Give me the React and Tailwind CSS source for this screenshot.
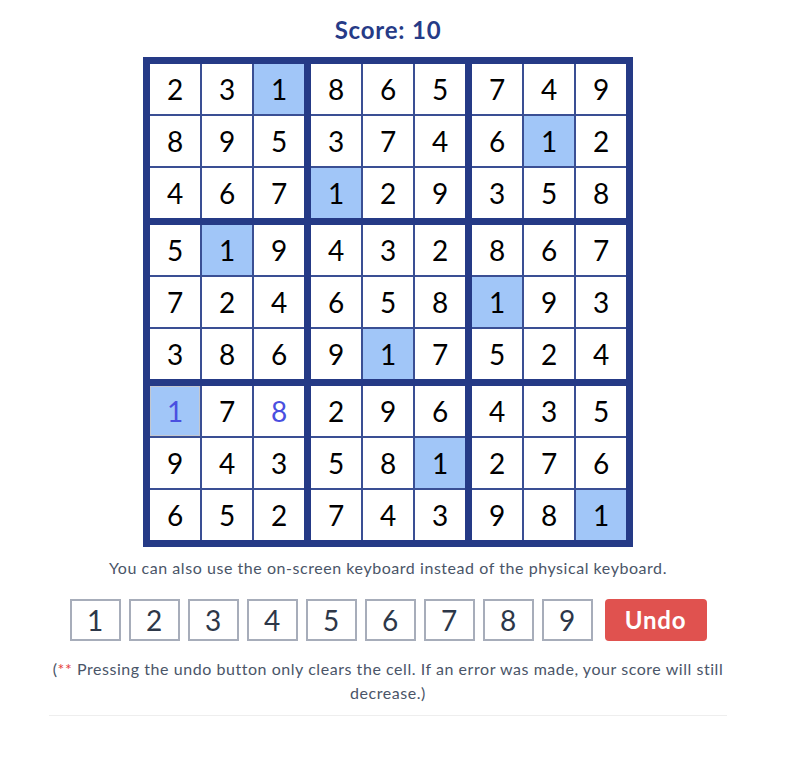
import React from "react";

const grid = [
  [2, 3, 1, 8, 6, 5, 7, 4, 9],
  [8, 9, 5, 3, 7, 4, 6, 1, 2],
  [4, 6, 7, 1, 2, 9, 3, 5, 8],
  [5, 1, 9, 4, 3, 2, 8, 6, 7],
  [7, 2, 4, 6, 5, 8, 1, 9, 3],
  [3, 8, 6, 9, 1, 7, 5, 2, 4],
  [1, 7, 8, 2, 9, 6, 4, 3, 5],
  [9, 4, 3, 5, 8, 1, 2, 7, 6],
  [6, 5, 2, 7, 4, 3, 9, 8, 1],
];

function Cell({ r, c }) {
  const v = grid[r][c];
  const selected = r === 6 && c === 0;
  const userEntered = r === 6 && c === 2;
  const hl = v === 1;
  let cls = "w-[50px] h-[50px] flex items-center justify-center text-[28px] leading-none ";
  cls += hl ? "bg-[#a1c6f8] " : "bg-white ";
  if (selected) cls += "border border-[#c3c7cf] text-[#4a4fe0] ";
  else if (userEntered) cls += "text-[#4a4fe0] ";
  else cls += "text-black ";
  return <div className={cls}>{v}</div>;
}

function Box({ br, bc }) {
  const cells = [];
  for (let i = 0; i < 3; i++)
    for (let j = 0; j < 3; j++)
      cells.push(<Cell key={i * 3 + j} r={br * 3 + i} c={bc * 3 + j} />);
  return <div className="grid grid-cols-3 gap-[2px] bg-[#3a4f94]">{cells}</div>;
}

export default function App() {
  const boxes = [];
  for (let i = 0; i < 3; i++)
    for (let j = 0; j < 3; j++) boxes.push(<Box key={i * 3 + j} br={i} bc={j} />);
  return (
    <div
      className="w-[776px] flex flex-col items-center bg-white pt-[15px]"
      style={{ fontFamily: "Lato, 'Open Sans', sans-serif" }}
    >
      <div className="text-[24px] font-bold tracking-[0.8px] text-[#263b87] leading-[30px] h-[30px]">Score: 10</div>
      <div className="mt-[12px] bg-[#253a86] p-[7px] grid grid-cols-3 gap-[7px]">{boxes}</div>
      <div className="mt-[10px] text-[16px] tracking-[0.55px] text-[#4a5568] leading-[22px]">
        You can also use the on-screen keyboard instead of the physical keyboard.
      </div>
      <div className="mt-[20px] flex items-center">
        {[1, 2, 3, 4, 5, 6, 7, 8, 9].map((n) => (
          <div
            key={n}
            className="w-[51px] h-[42px] mr-[8px] border-2 border-[#a7adba] flex items-center justify-center text-[28px] font-normal text-[#2d3748] leading-none"
          >
            {n}
          </div>
        ))}
        <div className="ml-[4px] w-[102px] h-[42px] rounded-[4px] bg-[#e0524f] text-white font-bold text-[24px] tracking-[0.8px] flex items-center justify-center">
          Undo
        </div>
      </div>
      <div className="mt-[16px] w-[690px] text-center text-[16px] tracking-[0.55px] text-[#4a5568] leading-[24px]">
        (<span className="text-[#e53e3e]">**</span> Pressing the undo button only clears the cell. If an error was made, your score will still decrease.)
      </div>
      <div className="mt-[10px] w-[678px] h-px bg-[#eeeeee]"></div>
      <div className="h-[58px]"></div>
    </div>
  );
}
